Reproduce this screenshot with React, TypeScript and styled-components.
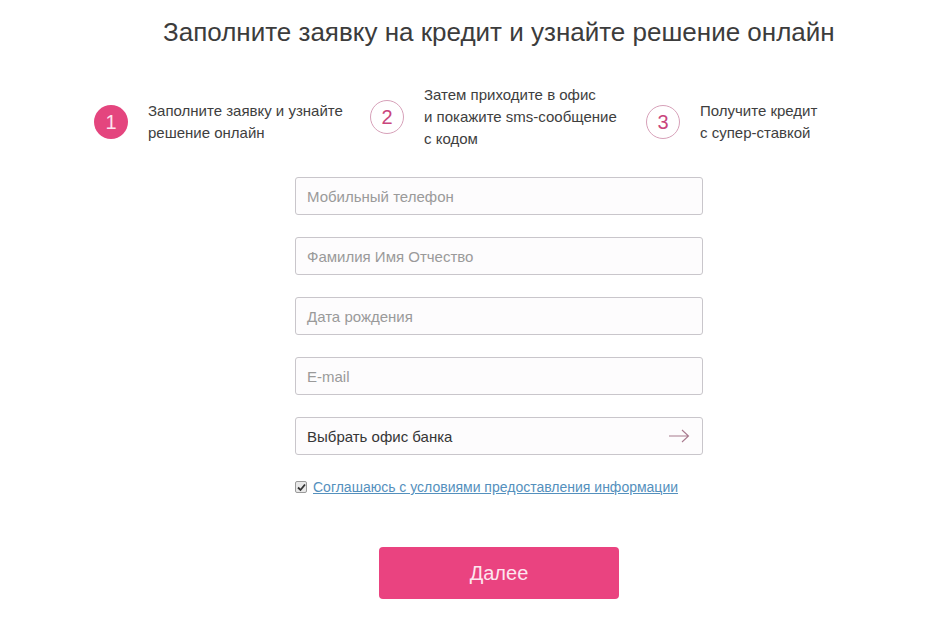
import React from "react";
import styled, { createGlobalStyle } from "styled-components";

const Global = createGlobalStyle`
  html, body { margin: 0; padding: 0; background: #ffffff; }
  body { font-family: "Liberation Sans", Arial, sans-serif; color: #333; }
  * { box-sizing: border-box; }
`;

const Page = styled.div`
  width: 937px;
  height: 624px;
  display: flex;
  flex-direction: column;
  align-items: stretch;
`;

const Title = styled.h1`
  margin: 17px 0 0 0;
  padding-left: 163px;
  font-size: 26px;
  line-height: 30px;
  font-weight: 400;
  color: #3c3c3c;
  white-space: nowrap;
`;

const Steps = styled.div`
  display: grid;
  grid-template-columns: repeat(3, 276px);
  padding-left: 94px;
  margin-top: 37px;
  align-items: start;
`;

const Step = styled.div<{ $offset?: number }>`
  display: flex;
  align-items: center;
  gap: 20px;
  margin-top: ${(p) => p.$offset ?? 0}px;
`;

const Circle = styled.div<{ $filled?: boolean }>`
  flex: 0 0 auto;
  width: 34px;
  height: 34px;
  border-radius: 50%;
  display: flex;
  align-items: center;
  justify-content: center;
  font-size: 20px;
  background: ${(p) => (p.$filled ? "#e4457e" : "transparent")};
  color: ${(p) => (p.$filled ? "#fde3ee" : "#c9457c")};
  border: ${(p) => (p.$filled ? "none" : "1px solid #d7a1b9")};
`;

const StepText = styled.div`
  font-size: 15px;
  line-height: 22px;
  color: #3e3e3e;
`;

const Form = styled.div`
  display: flex;
  flex-direction: column;
  align-items: flex-start;
  padding-left: 295px;
  margin-top: 27px;
  gap: 22px;
`;

const Field = styled.div<{ $filled?: boolean }>`
  width: 408px;
  height: 38px;
  border: 1px solid #c9c6cb;
  border-radius: 3px;
  background: #fdfcfd;
  display: flex;
  align-items: center;
  justify-content: space-between;
  padding: 0 11px 0 11px;
  font-size: 15px;
  color: ${(p) => (p.$filled ? "#363636" : "#9a9a9a")};
`;

const Arrow = styled.svg`
  width: 22px;
  height: 14px;
  margin-right: 1px;
`;

const Agree = styled.label`
  display: flex;
  align-items: center;
  gap: 6px;
  margin-top: 1px;
  font-size: 14px;
  line-height: 18px;
`;

const Check = styled.span`
  width: 12px;
  height: 12px;
  border: 1px solid #9a9a9a;
  border-radius: 2px;
  background: #e8e8e8;
  display: flex;
  align-items: center;
  justify-content: center;
`;

const Link = styled.a`
  color: #5490bd;
  text-decoration: underline;
  cursor: pointer;
`;

const ButtonRow = styled.div`
  display: flex;
  padding-left: 379px;
  margin-top: 51px;
`;

const Button = styled.button`
  width: 240px;
  height: 52px;
  border: none;
  border-radius: 4px;
  background: #ea4380;
  color: #fde6ef;
  font-family: "Liberation Sans", Arial, sans-serif;
  font-size: 20px;
  cursor: pointer;
`;

export default function App() {
  return (
    <Page>
      <Global />
      <Title>Заполните заявку на кредит и узнайте решение онлайн</Title>
      <Steps>
        <Step $offset={16}>
          <Circle $filled>1</Circle>
          <StepText>
            Заполните заявку и узнайте
            <br />
            решение онлайн
          </StepText>
        </Step>
        <Step>
          <Circle>2</Circle>
          <StepText>
            Затем приходите в офис
            <br />
            и покажите sms-сообщение
            <br />с кодом
          </StepText>
        </Step>
        <Step $offset={16}>
          <Circle>3</Circle>
          <StepText>
            Получите кредит
            <br />с супер-ставкой
          </StepText>
        </Step>
      </Steps>
      <Form>
        <Field>Мобильный телефон</Field>
        <Field>Фамилия Имя Отчество</Field>
        <Field>Дата рождения</Field>
        <Field>E-mail</Field>
        <Field $filled>
          Выбрать офис банка
          <Arrow viewBox="0 0 22 14">
            <path d="M1 7 H20 M14 1 L20.5 7 L14 13" fill="none" stroke="#a87a8e" strokeWidth="1.1" />
          </Arrow>
        </Field>
        <Agree>
          <Check>
            <svg width="9" height="9" viewBox="0 0 9 9">
              <path d="M1 4.5 L3.5 7 L8 1.5" fill="none" stroke="#333" strokeWidth="1.8" />
            </svg>
          </Check>
          <Link>Соглашаюсь с условиями предоставления информации</Link>
        </Agree>
      </Form>
      <ButtonRow>
        <Button>Далее</Button>
      </ButtonRow>
    </Page>
  );
}
